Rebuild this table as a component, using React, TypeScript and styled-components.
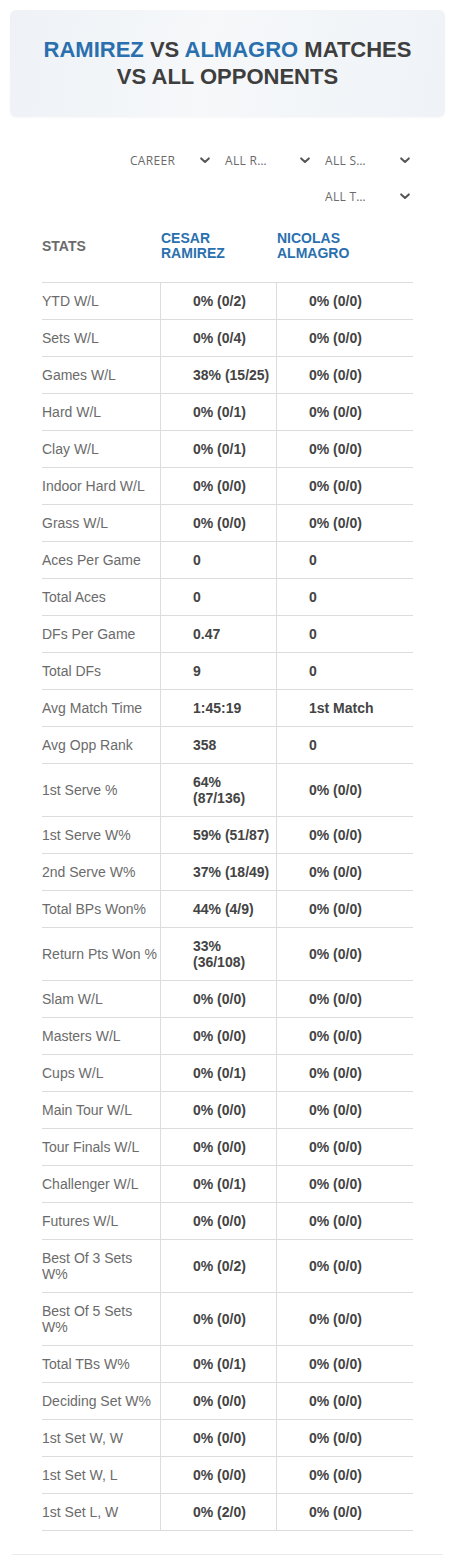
import * as React from "react";
import styled, { createGlobalStyle } from "styled-components";

const GlobalStyle = createGlobalStyle`
  body {
    margin: 0;
    background: #fff;
    font-family: "Liberation Sans", Arial, sans-serif;
  }
`;

const Page = styled.div`
  width: 455px;
  padding: 10px 0 0;
  box-sizing: border-box;
`;

const HeaderCard = styled.div`
  margin: 0 10px;
  padding: 26px 20px 27px;
  border-radius: 6px;
  background: linear-gradient(100deg, #eef2f6 0%, #f6f8fa 45%, #eff3f7 100%);
  box-shadow: 0 1px 2px rgba(0, 0, 0, 0.03);
`;

const Title = styled.h1`
  margin: 0;
  font-size: 22px;
  line-height: 27px;
  font-weight: 700;
  text-align: center;
  text-transform: uppercase;
  color: #3e3e3e;
`;

const Name = styled.span`
  color: #2a70ae;
`;

const Section = styled.div`
  margin: 0 12px;
  padding: 25px 0 23px;
  border-bottom: 1px solid #ebebeb;
`;

const Filters = styled.div`
  display: flex;
  flex-wrap: wrap;
  justify-content: flex-end;
  width: 300px;
  margin: 0 31px 0 auto;
`;

const Select = styled.div`
  width: 100px;
  height: 36px;
  display: flex;
  align-items: center;
  justify-content: space-between;
  padding: 0 2px 0 13px;
  box-sizing: border-box;
  font-family: "Open Sans", "Liberation Sans", sans-serif;
  font-size: 12px;
  letter-spacing: 0.3px;
  color: #6a6a6a;
  text-transform: uppercase;

  &:first-child {
    padding-left: 18px;
  }
`;

const SelectText = styled.span`
  max-width: 47px;
  white-space: nowrap;
  overflow: hidden;
  text-overflow: ellipsis;
`;

const Chevron = () => (
  <svg width="10" height="7" viewBox="0 0 10 7">
    <path d="M1.2 1.4 L5 5 L8.8 1.4" fill="none" stroke="#555" strokeWidth="2" strokeLinecap="round" strokeLinejoin="round" />
  </svg>
);

const Table = styled.div`
  display: grid;
  grid-template-columns: 118px 116px 137px;
  margin: 9px 0 0 30px;
  font-size: 14px;
`;

const HeadCell = styled.div<{ $blue?: boolean }>`
  padding: 8px ${(p) => (p.$blue ? "20px" : "0")} 21px ${(p) => (p.$blue ? "1px" : "0")};
  display: flex;
  align-items: center;
  font-weight: 700;
  line-height: 15px;
  text-transform: uppercase;
  color: ${(p) => (p.$blue ? "#2a70ae" : "#6b6b6b")};
  border-bottom: 1px solid #dcdcdc;
`;

const LabelCell = styled.div`
  padding: 10px 2px 10px 0;
  line-height: 16px;
  color: #6b6b6b;
  border-bottom: 1px solid #dcdcdc;
  display: flex;
  align-items: center;
`;

const ValueCell = styled.div`
  padding: 10px 4px 10px 32px;
  line-height: 16px;
  font-weight: 700;
  color: #444;
  border-left: 1px solid #dcdcdc;
  border-bottom: 1px solid #dcdcdc;
  display: flex;
  align-items: center;
`;

const rows: [string, string, string][] = [
  ["YTD W/L", "0% (0/2)", "0% (0/0)"],
  ["Sets W/L", "0% (0/4)", "0% (0/0)"],
  ["Games W/L", "38% (15/25)", "0% (0/0)"],
  ["Hard W/L", "0% (0/1)", "0% (0/0)"],
  ["Clay W/L", "0% (0/1)", "0% (0/0)"],
  ["Indoor Hard W/L", "0% (0/0)", "0% (0/0)"],
  ["Grass W/L", "0% (0/0)", "0% (0/0)"],
  ["Aces Per Game", "0", "0"],
  ["Total Aces", "0", "0"],
  ["DFs Per Game", "0.47", "0"],
  ["Total DFs", "9", "0"],
  ["Avg Match Time", "1:45:19", "1st Match"],
  ["Avg Opp Rank", "358", "0"],
  ["1st Serve %", "64% (87/136)", "0% (0/0)"],
  ["1st Serve W%", "59% (51/87)", "0% (0/0)"],
  ["2nd Serve W%", "37% (18/49)", "0% (0/0)"],
  ["Total BPs Won%", "44% (4/9)", "0% (0/0)"],
  ["Return Pts Won %", "33% (36/108)", "0% (0/0)"],
  ["Slam W/L", "0% (0/0)", "0% (0/0)"],
  ["Masters W/L", "0% (0/0)", "0% (0/0)"],
  ["Cups W/L", "0% (0/1)", "0% (0/0)"],
  ["Main Tour W/L", "0% (0/0)", "0% (0/0)"],
  ["Tour Finals W/L", "0% (0/0)", "0% (0/0)"],
  ["Challenger W/L", "0% (0/1)", "0% (0/0)"],
  ["Futures W/L", "0% (0/0)", "0% (0/0)"],
  ["Best Of 3 Sets W%", "0% (0/2)", "0% (0/0)"],
  ["Best Of 5 Sets W%", "0% (0/0)", "0% (0/0)"],
  ["Total TBs W%", "0% (0/1)", "0% (0/0)"],
  ["Deciding Set W%", "0% (0/0)", "0% (0/0)"],
  ["1st Set W, W", "0% (0/0)", "0% (0/0)"],
  ["1st Set W, L", "0% (0/0)", "0% (0/0)"],
  ["1st Set L, W", "0% (2/0)", "0% (0/0)"],
];

const filters = ["Career", "All Rounds", "All Surfaces", "All Tournaments"];

export default function App() {
  return (
    <Page>
      <GlobalStyle />
      <HeaderCard>
        <Title>
          <Name>Ramirez</Name> vs <Name>Almagro</Name> Matches vs All Opponents
        </Title>
      </HeaderCard>
      <Section>
        <Filters>
          {filters.map((f) => (
            <Select key={f}>
              <SelectText>{f}</SelectText>
              <Chevron />
            </Select>
          ))}
        </Filters>
        <Table>
          <HeadCell>Stats</HeadCell>
          <HeadCell $blue>Cesar Ramirez</HeadCell>
          <HeadCell $blue>Nicolas Almagro</HeadCell>
          {rows.map(([label, a, b]) => (
            <React.Fragment key={label}>
              <LabelCell>{label}</LabelCell>
              <ValueCell>{a}</ValueCell>
              <ValueCell>{b}</ValueCell>
            </React.Fragment>
          ))}
        </Table>
      </Section>
    </Page>
  );
}
